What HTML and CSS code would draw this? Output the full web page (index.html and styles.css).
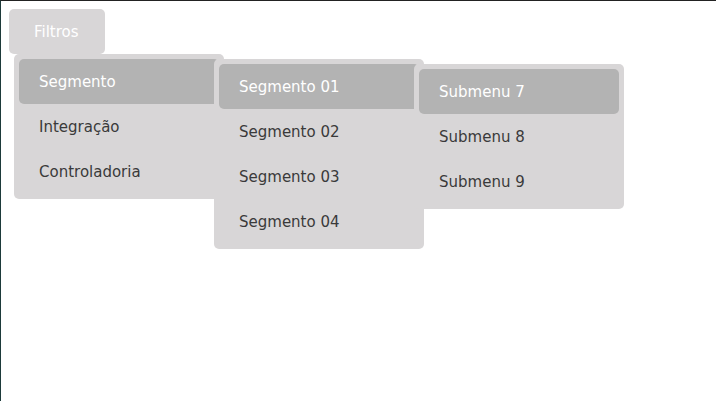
FILE: index.html
```html
<!DOCTYPE html>
<html lang="pt">
<head>
<meta charset="utf-8">
<title>Filtros</title>
<link rel="stylesheet" href="styles.css">
</head>
<body>
<nav class="nav">
  <div class="dropdown">
    <div class="trigger">Filtros</div>
    <ul class="menu menu-1">
      <li class="item active">Segmento
        <ul class="menu sub">
          <li class="item active">Segmento 01
            <ul class="menu sub">
              <li class="item active">Submenu 7</li>
              <li class="item">Submenu 8</li>
              <li class="item">Submenu 9</li>
            </ul>
          </li>
          <li class="item">Segmento 02</li>
          <li class="item">Segmento 03</li>
          <li class="item">Segmento 04</li>
        </ul>
      </li>
      <li class="item">Integração</li>
      <li class="item">Controladoria</li>
    </ul>
  </div>
</nav>
</body>
</html>
```

FILE: styles.css
```css
html, body {
  height: 100%;
}
body {
  margin: 0;
  box-sizing: border-box;
  padding: 8px;
  border-top: 1px solid #222222;
  border-left: 1px solid #1d3a3a;
  background: #ffffff;
  font-family: "DejaVu Sans", Verdana, sans-serif;
  font-size: 15px;
  color: #3a3a3a;
}
.nav {
  display: flex;
}
.dropdown {
  position: relative;
}
.trigger {
  height: 45px;
  line-height: 46px;
  padding: 0 26px 0 25px;
  background: #d8d6d7;
  color: #ffffff;
  border-radius: 5px;
}
.menu {
  list-style: none;
  margin: 0;
  padding: 5px;
  width: 200px;
  background: #d8d6d7;
  border-radius: 5px;
  position: absolute;
}
.menu-1 {
  top: 45px;
  left: 5px;
}
.sub {
  top: 0;
  left: 195px;
}
.item {
  position: relative;
  height: 45px;
  line-height: 46px;
  padding: 0 20px;
  border-radius: 5px;
  white-space: nowrap;
}
.item.active {
  background: #b3b3b3;
  color: #ffffff;
}
.item.active .item:not(.active) {
  color: #3a3a3a;
}
```
